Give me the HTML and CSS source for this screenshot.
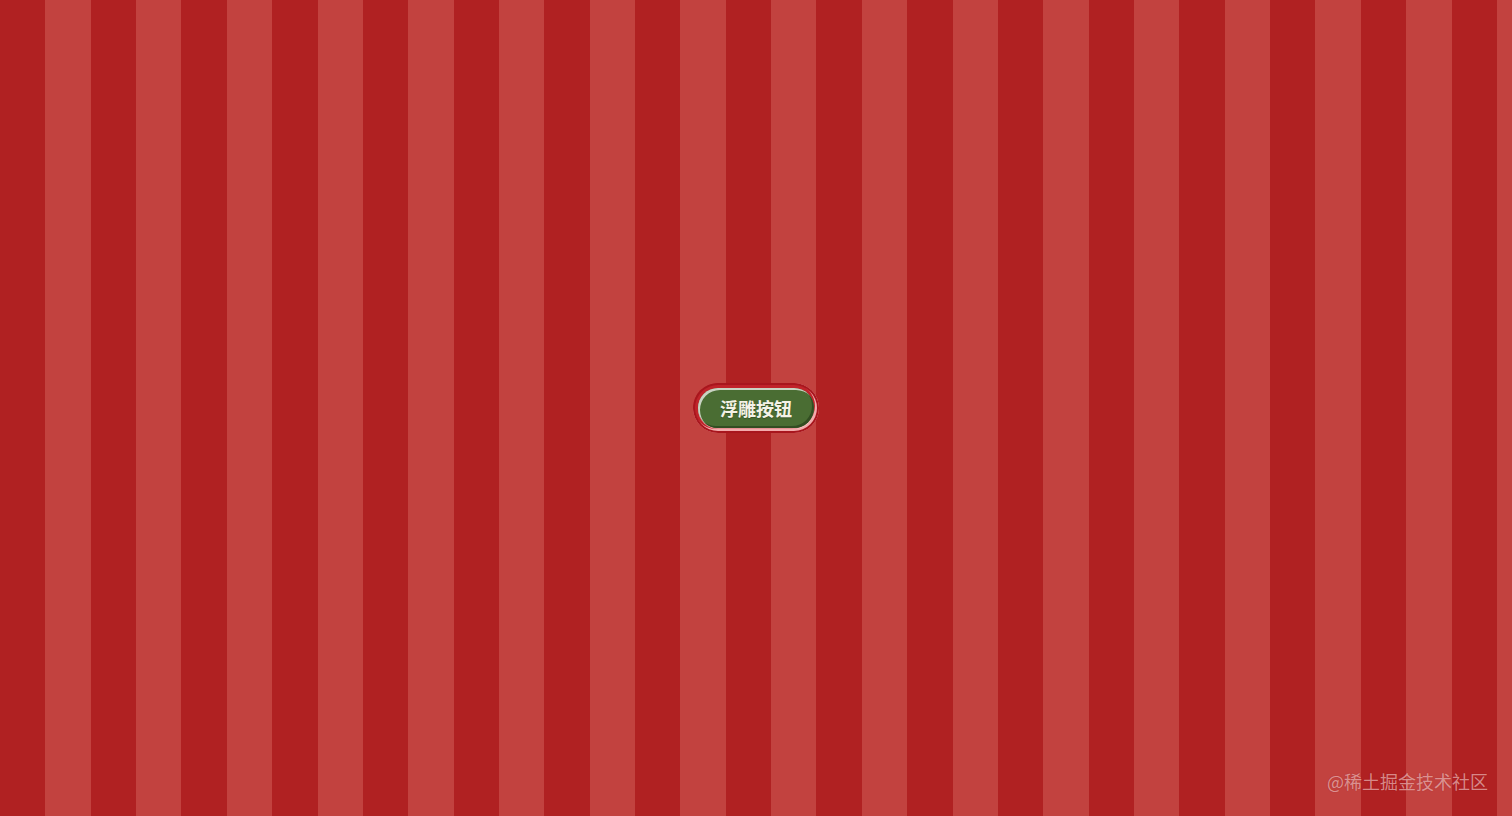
FILE: index.html
```html
<!DOCTYPE html>
<html lang="zh">
<head>
<meta charset="utf-8">
<title>浮雕按钮</title>
<link rel="stylesheet" href="styles.css">
</head>
<body>
<main class="stage">
  <div class="btn-ring">
    <button class="btn">浮雕按钮</button>
  </div>
</main>
<div class="watermark">@稀土掘金技术社区</div>
</body>
</html>
```
FILE: styles.css
```css
html, body {
  margin: 0;
  padding: 0;
  height: 100%;
}
body {
  background: repeating-linear-gradient(90deg, #b02122 0, #b02122 3%, #c2423f 3%, #c2423f 6%);
  font-family: "Noto Sans CJK SC", "Noto Sans", sans-serif;
  overflow: hidden;
}
.stage {
  height: 100%;
  display: flex;
  align-items: center;
  justify-content: center;
}
.btn-ring {
  box-sizing: border-box;
  width: 126px;
  height: 50px;
  padding: 5px;
  border-radius: 25px;
  background: #c0232a;
  box-shadow: inset 0 0 0 2px #a8161d, inset -2px -2px 0 2px rgba(255, 205, 205, 0.8);
  display: flex;
}
.btn {
  box-sizing: border-box;
  flex: 1;
  border: none;
  border-radius: 20px;
  background: #4a6d33;
  color: #f4f2e6;
  font-family: "Noto Sans CJK SC", sans-serif;
  font-weight: 700;
  font-size: 18px;
  line-height: 1;
  padding: 0;
  box-shadow: inset 2px 2px 0 rgba(255, 255, 255, 0.7), inset -2px -2px 0 #324d22, 0 1px 0 rgba(255, 220, 220, 0.6);
  text-shadow: 0 1px 1px rgba(0, 0, 0, 0.25);
}
.watermark {
  position: absolute;
  right: 24px;
  bottom: 23px;
  font-size: 18px;
  line-height: 24px;
  color: rgba(255, 215, 215, 0.6);
  text-shadow: 0 0 1px rgba(120, 0, 0, 0.4);
}
```
